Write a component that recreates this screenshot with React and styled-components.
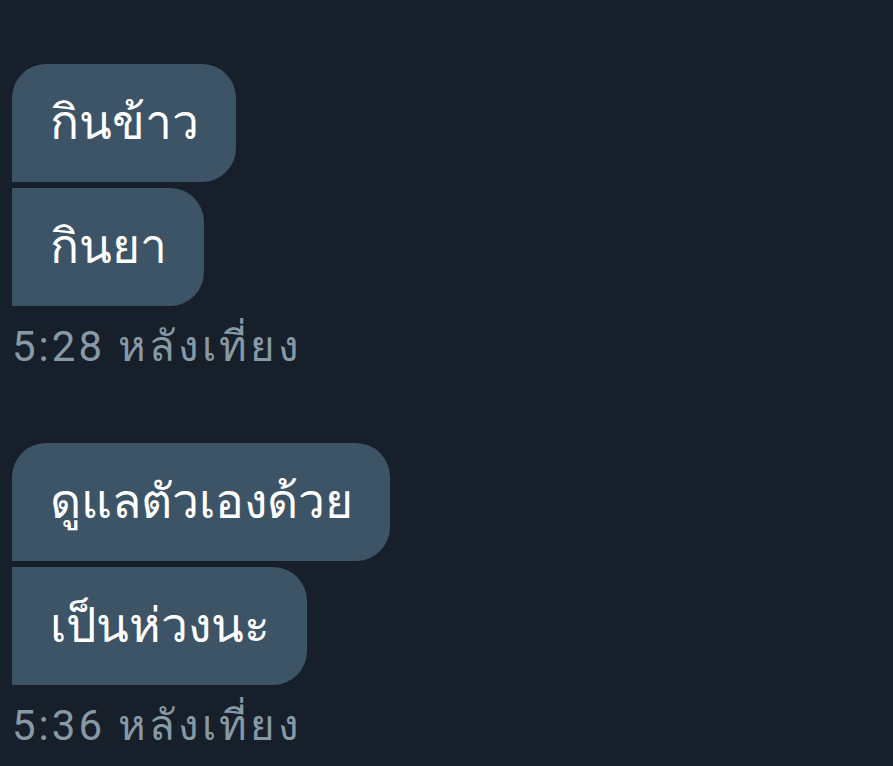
import styled, { createGlobalStyle } from "styled-components";

const GlobalStyle = createGlobalStyle`
  html, body {
    margin: 0;
    padding: 0;
    background-color: #17202a;
  }
  body {
    font-family: Roboto, "Noto Sans", sans-serif;
  }
`;

const Thread = styled.div`
  width: 893px;
  height: 766px;
  overflow: hidden;
  padding: 64px 0 0 12px;
  box-sizing: border-box;
  display: flex;
  flex-direction: column;
`;

const Group = styled.div`
  display: flex;
  flex-direction: column;
  align-items: flex-start;
  gap: 6px;
  margin-bottom: 74px;
`;

const Bubble = styled.div`
  background-color: #3d5466;
  color: #ffffff;
  font-size: 48px;
  line-height: 118px;
  height: 118px;
  padding: 0 37px 0 38px;
  box-sizing: border-box;
  white-space: nowrap;
  border-radius: ${(p) => (p.$first ? "34px 34px 34px 0" : "0 34px 34px 0")};
`;

const Stamp = styled.div`
  color: #8899a6;
  font-size: 42px;
  letter-spacing: 3px;
  line-height: 44px;
  margin-top: 13px;
  white-space: nowrap;
`;

const groups = [
  { messages: ["กินข้าว", "กินยา"], time: "5:28 หลังเที่ยง" },
  { messages: ["ดูแลตัวเองด้วย", "เป็นห่วงนะ"], time: "5:36 หลังเที่ยง" },
];

export default function App() {
  return (
    <>
      <GlobalStyle />
      <Thread>
        {groups.map((g) => (
          <Group key={g.time}>
            {g.messages.map((m, i) => (
              <Bubble key={m} $first={i === 0}>
                {m}
              </Bubble>
            ))}
            <Stamp>{g.time}</Stamp>
          </Group>
        ))}
      </Thread>
    </>
  );
}
